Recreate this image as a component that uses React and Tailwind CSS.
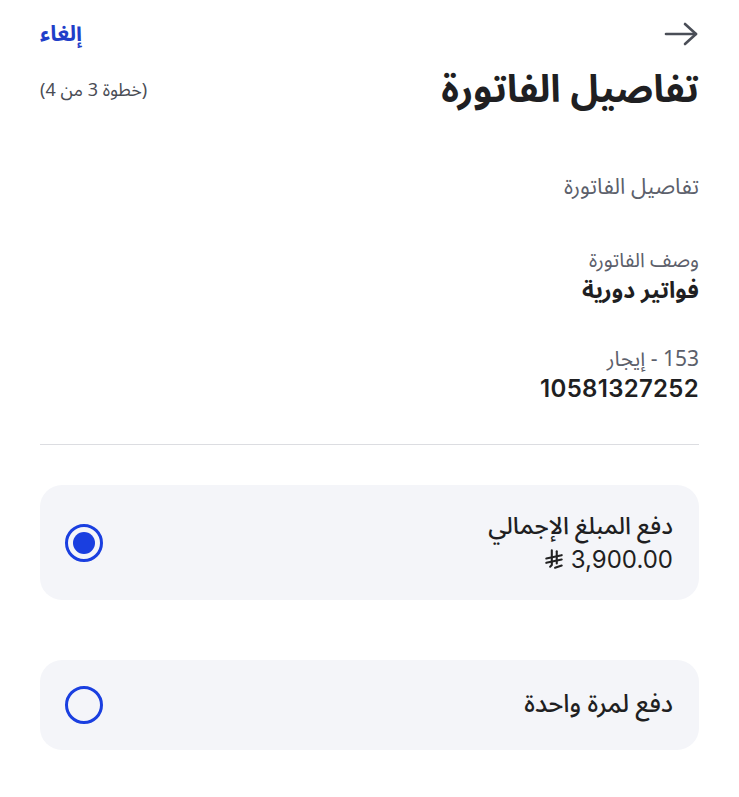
import React from "react";

const font = { fontFamily: '"Noto Sans Arabic", "Noto Sans", Inter, "DejaVu Sans", sans-serif' };
const num = { fontFamily: 'Inter, "Noto Sans", sans-serif' };

function Riyal() {
  return (
    <svg width="22" height="22" viewBox="0 0 20 20" fill="none" stroke="#222" strokeWidth="1.9" strokeLinecap="round" strokeLinejoin="round">
      <path d="M8 2v13.5l-1.5 1.5" />
      <path d="M12.5 3v11" />
      <path d="M3 9.5l14-3" />
      <path d="M3 13.5l14-3" />
      <path d="M11 18l6-2" />
    </svg>
  );
}

function Radio({ checked }) {
  return (
    <div className="w-[38px] h-[38px] rounded-full border-[3px] border-[#1a3fe0] flex items-center justify-center shrink-0">
      {checked && <div className="w-[22px] h-[22px] rounded-full bg-[#1a3fe0]" />}
    </div>
  );
}

export default function App() {
  return (
    <div dir="rtl" style={font} className="w-[739px] h-[797px] bg-white px-[40px] text-[#1f1f22] overflow-hidden">
      <div className="flex items-center justify-between pt-[18px] h-[50px]">
        <svg width="34" height="26" viewBox="0 0 34 26" fill="none" stroke="#4a4e57" strokeWidth="2.6" strokeLinecap="round" strokeLinejoin="round" className="mr-[1px]">
          <path d="M2 13h30" />
          <path d="M21 3l11 10-11 10" />
        </svg>
        <span className="text-[22px] font-bold text-[#1f3fc9] leading-[30px]">إلغاء</span>
      </div>
      <div className="flex items-center justify-between mt-[14px]">
        <h1 className="text-[38px] font-bold leading-[52px] text-[#1f1f22]">تفاصيل الفاتورة</h1>
        <span className="text-[18px] text-[#4a4d55]">(خطوة 3 من 4)</span>
      </div>
      <div className="mt-[56px] text-[22px] text-[#5c606b] leading-[30px]">تفاصيل الفاتورة</div>

      <div className="mt-[45px]">
        <div className="text-[20px] text-[#5c606b] leading-[28px]">وصف الفاتورة</div>
        <div className="text-[23px] font-bold leading-[32px]">فواتير دورية</div>
      </div>

      <div className="mt-[38px]">
        <div className="text-[21px] text-[#5c606b] leading-[28px]">153 - إيجار</div>
        <div className="text-[24px] font-semibold leading-[32px] tracking-[0.3px]" style={num}>10581327252</div>
      </div>

      <div className="mt-[39px] h-px bg-[#dcdde1]" />

      <div className="mt-[40px] h-[115px] rounded-[22px] bg-[#f4f5f9] flex items-center justify-between pr-[26px] pl-[25px]">
        <div className="flex flex-col">
          <span className="text-[24px] leading-[33px] font-medium">دفع المبلغ الإجمالي</span>
          <span className="flex items-center gap-[6px] text-[24px] leading-[33px]">
            <span style={num} dir="ltr">3,900.00</span>
            <Riyal />
          </span>
        </div>
        <Radio checked />
      </div>

      <div className="mt-[60px] h-[90px] rounded-[22px] bg-[#f4f5f9] flex items-center justify-between pr-[26px] pl-[25px]">
        <span className="text-[25px] font-medium">دفع لمرة واحدة</span>
        <Radio />
      </div>
    </div>
  );
}
